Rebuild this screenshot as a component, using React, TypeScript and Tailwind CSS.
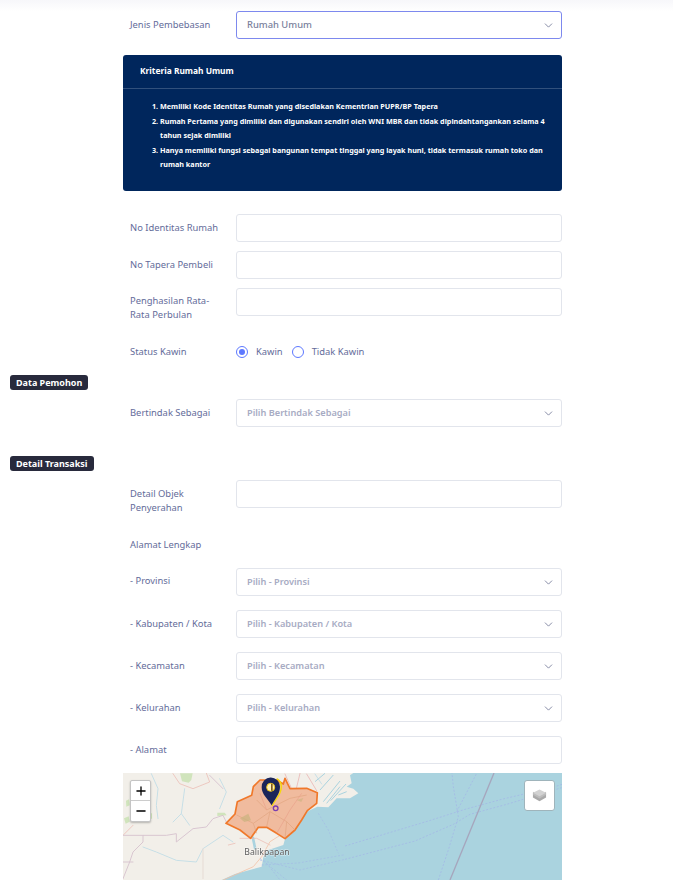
import { ChevronDown, Plus, Minus } from 'lucide-react'

const font = { fontFamily: '"Noto Sans", sans-serif' }

function Label({ children, className = 'pt-[7px]' }: { children: React.ReactNode; className?: string }) {
  return <div className={`w-[113px] shrink-0 pl-[7px] pr-[14px] text-[9.4px] leading-[14px] text-[#646c9a] ${className}`}>{children}</div>
}

function TextRow({ label, className = '', labelClass }: { label: React.ReactNode; className?: string; labelClass?: string }) {
  return (
    <div className={`flex items-start ${className}`}>
      <Label className={labelClass}>{label}</Label>
      <div className="h-[28px] w-[326px] rounded-[3px] border border-[#e2e5ec] bg-white" />
    </div>
  )
}

function SelectRow({ label, value, className = '', labelClass, active = false }: { label: string; value: string; className?: string; labelClass?: string; active?: boolean }) {
  return (
    <div className={`flex items-start ${className}`}>
      <Label className={labelClass}>{label}</Label>
      <div className={`flex h-[28px] w-[326px] items-center justify-between rounded-[3px] border bg-white pl-[10px] pr-[6px] ${active ? 'border-[#7d89ee] text-[9.4px] font-medium text-[#7a7f9c]' : 'border-[#e2e5ec] text-[9.2px] font-semibold text-[#a7abc3]'}`}>
        <span>{value}</span>
        <ChevronDown size={13} strokeWidth={1.5} className="text-[#6c7293]" />
      </div>
    </div>
  )
}

function Tag({ children, className = '' }: { children: React.ReactNode; className?: string }) {
  return <div className={`flex h-[15px] w-fit items-center rounded-[3px] bg-[#282a3c] px-[6px] text-[9px] font-bold text-white ${className}`}>{children}</div>
}

function Radio({ on, label }: { on?: boolean; label: string }) {
  return (
    <div className="flex items-center gap-[8px]">
      <span className="flex h-[12px] w-[12px] items-center justify-center rounded-full border border-[#5d78ff] bg-white">
        {on && <span className="h-[6px] w-[6px] rounded-full bg-[#5d78ff]" />}
      </span>
      <span className="text-[9.4px] text-[#646c9a]">{label}</span>
    </div>
  )
}

function MapArt() {
  return (
    <svg viewBox="9 9 1317 321" className="block h-[107px] w-[439px] blur-[0.4px]">
      <rect x="9" y="9" width="1317" height="321" fill="#aad3df" />
      {/* daratan dan delta */}
      <path d="M9 9H700L690 16 695 40 680 50 700 56 715 70 690 85 650 85 625 112 592 110 560 125 545 150 525 180 495 207 490 225 445 240 430 262 425 290 345 312 305 330H9Z" fill="#f2efe9" />
      <g fill="none" stroke="#aad3df" strokeWidth="3">
        <path d="M610 95l50-62M632 92l46-50M600 60l40-45M655 75l25-10M620 100l40-50M585 35l30-25" />
        <path d="M398 200l8 38" strokeWidth="8" />
      </g>
      <g fill="#d0e4bc">
        <path d="M180 10l38 0-4 20-8 8-20-4Z" />
        <path d="M18 92l9-4 2 18-10 4Z" />
        <path d="M12 145l14-6 3 16-12 6Z" />
        <path d="M80 130l16 0 0 16-14 0Z" />
        <path d="M292 128l22 0 6 8-28 2Z" />
      </g>
      {/* sungai dan jalan */}
      <g fill="none" strokeLinecap="round" strokeLinejoin="round" opacity="0.8">
        <path d="M94 11l20 45-5 50 5 40M194 56l-10 75-25 25M184 131l25 35M69 231l40 15 60 25 60 5 20-40 60-40 30 20M299 26l20 40-20 50M585 12l20 30" stroke="#bcdbe6" strokeWidth="3" />
        <path d="M159 11l20 30 40 15 50-20-10-27M9 196l30-30M360 205l50 0 40 20M345 220l-20 5" stroke="#eab5ac" strokeWidth="2.5" />
        <path d="M9 196h60l70 0 30-5 0 25 50-40 40-5 20-25 30-10 10 20M69 196v20l-30 30-10 30-20 50M9 276h30M269 16l40 40" stroke="#d3bccb" strokeWidth="3" />
        <path d="M249 236v90" stroke="#e4d6cf" strokeWidth="3" />
        <path d="M495 12l18 40M540 10l-12 50M560 12l30 50" stroke="#e8a9a8" strokeWidth="2.5" />
        <path d="M310 330l90-40 25-30 25-45 40-25" stroke="#f3c2a7" strokeWidth="3" />
      </g>
      {/* wilayah */}
      <path d="M318 160L345 132 352 95 395 76 400 50 420 30 470 30 490 42 495 25 510 56 560 55 592 68 590 100 562 122 545 150 525 180 495 206 470 190 440 172 415 172 392 205 360 180Z" fill="#f0bb9e" stroke="#f0782a" strokeWidth="5" strokeLinejoin="round" />
      <g fill="none" strokeWidth="2" opacity="0.8">
        <path d="M350 135l50 25 50-35 50 30 25 25M400 160l10 30M450 125l-10 45M500 155l-5 50M410 90l30 30 70-35 50-10" stroke="#dd9f78" />
        <path d="M470 190l40-70 35-50M420 70l20 50" stroke="#e79a85" />
      </g>
      <path d="M360 145l25-14 8 20-20 5Z" fill="#c9b27f" opacity="0.7" />
      <path d="M530 90l20-6-6 12Z" fill="#c9b27f" opacity="0.6" />
      {/* laut: jalur pelayaran */}
      <g fill="none" stroke="#a3b9e6" strokeWidth="2.5" strokeDasharray="6 5">
        <path d="M675 228l250-75 110-35 110-30 160-38 30-10" />
        <path d="M675 268l210-55 115-50 50-30 110-30 165-50" />
        <path d="M955 330l30-90 30-100-15-90-5-50" />
        <path d="M1010 125l60-115" />
        <path d="M420 270l120 30 135-32M425 285l110-6 140-25M420 265l80 65M440 280l40 50" strokeWidth="2" />
        <path d="M595 130l30 50 30 70" strokeWidth="2" />
      </g>
      <path d="M990 330L1122 9" stroke="#a6a6bd" strokeWidth="4" />
      {/* penanda */}
      <circle cx="467" cy="115" r="7" fill="none" stroke="#7a3fb0" strokeWidth="4" />
      <path d="M456 108C468 84 484 74 484 50C484 38 478 30 470 26" fill="none" stroke="#f5d90a" strokeWidth="4" />
      <path d="M455 106C442 84 425 74 425 52A27 28 0 0 1 480 50C480 72 466 84 455 106Z" fill="#1b2559" />
      <circle cx="452" cy="52" r="12" fill="#fff2bf" stroke="#f1c40f" strokeWidth="3" />
      <path d="M453 41h5v21h-5Z" fill="#7f5a1c" />
      <text x="441" y="254" textAnchor="middle" fontSize="26" fill="#5c5c5c" stroke="#ffffff" strokeOpacity="0.6" strokeWidth="3" paintOrder="stroke" style={font}>Balikpapan</text>
    </svg>
  )
}

export default function App() {
  return (
    <div className="relative h-[880px] w-[673px] overflow-hidden bg-white" style={font}>
      <div className="h-[11px] bg-gradient-to-b from-[#f7f7fa] to-white" />
      <div className="ml-[123px] w-[439px]">
        <SelectRow label="Jenis Pembebasan" value="Rumah Umum" active />

        <div className="mt-[16px] h-[136px] rounded-[3px] bg-[#00265c] text-white">
          <div className="flex h-[34px] items-center border-b border-[#31507c] pl-[17px] text-[8.4px] font-bold">Kriteria Rumah Umum</div>
          <ol className="mt-[10px] list-decimal pl-[37px] pr-[12px] text-[7.22px] font-bold leading-[14.5px] text-white">
            <li>Memiliki Kode Identitas Rumah yang disediakan Kementrian PUPR/BP Tapera</li>
            <li>Rumah Pertama yang dimiliki dan digunakan sendiri oleh WNI MBR dan tidak dipindahtangankan selama 4 tahun sejak dimiliki</li>
            <li>Hanya memiliki fungsi sebagai bangunan tempat tinggal yang layak huni, tidak termasuk rumah toko dan rumah kantor</li>
          </ol>
        </div>

        <TextRow label="No Identitas Rumah" className="mt-[23px]" />
        <TextRow label="No Tapera Pembeli" className="mt-[9px]" />
        <TextRow label="Penghasilan Rata-Rata Perbulan" className="mt-[9px]" labelClass="pt-[6px]" />

        <div className="mt-[16px] flex h-[29px] items-start">
          <Label>Status Kawin</Label>
          <div className="mt-[7px] flex items-center gap-[9px]">
            <Radio on label="Kawin" />
            <Radio label="Tidak Kawin" />
          </div>
        </div>
      </div>

      <Tag className="ml-[10px] mt-[8px]">Data Pemohon</Tag>

      <div className="ml-[123px] w-[439px]">
        <SelectRow label="Bertindak Sebagai" value="Pilih Bertindak Sebagai" className="mt-[9px]" />
      </div>

      <Tag className="ml-[10px] mt-[29px]">Detail Transaksi</Tag>

      <div className="ml-[123px] w-[439px]">
        <TextRow label="Detail Objek Penyerahan" className="mt-[9px]" />
        <div className="mt-[23px] h-[15px]"><Label className="pt-0">Alamat Lengkap</Label></div>
        <SelectRow label="- Provinsi" value="Pilih - Provinsi" className="mt-[15px]" labelClass="pt-[6px]" />
        <SelectRow label="- Kabupaten / Kota" value="Pilih - Kabupaten / Kota" className="mt-[14px]" />
        <SelectRow label="- Kecamatan" value="Pilih - Kecamatan" className="mt-[14px]" />
        <SelectRow label="- Kelurahan" value="Pilih - Kelurahan" className="mt-[14px]" />
        <TextRow label="- Alamat" className="mt-[14px]" />

        <div className="relative mt-[9px] h-[107px] overflow-hidden">
          <MapArt />
          <div className="absolute left-[7px] top-[7px] flex w-[21px] flex-col rounded-[2px] border border-[#c4c4c4] bg-white text-black shadow-[0_1px_2px_rgba(0,0,0,0.25)]">
            <div className="flex h-[20px] items-center justify-center border-b border-[#ccc]"><Plus size={14} strokeWidth={2.25} /></div>
            <div className="flex h-[20px] items-center justify-center"><Minus size={14} strokeWidth={2.25} /></div>
          </div>
          <div className="absolute left-[401px] top-[7px] flex h-[31px] w-[31px] items-center justify-center rounded-[3px] border border-[#9fb4bb] bg-white">
            <svg viewBox="0 0 16 16" className="h-[15px] w-[15px]">
              <path d="M8 8.5L1 5.5v4.5L8 14 15 10V5.5Z" fill="#a9a9a9" />
              <path d="M8 6.5L1 4v3.2L8 11.2 15 7.2V4Z" fill="#bcbcbc" />
              <path d="M8 1.5L1 5 8 8.8 15 5Z" fill="#d2d2d2" />
            </svg>
          </div>
        </div>
      </div>
    </div>
  )
}
